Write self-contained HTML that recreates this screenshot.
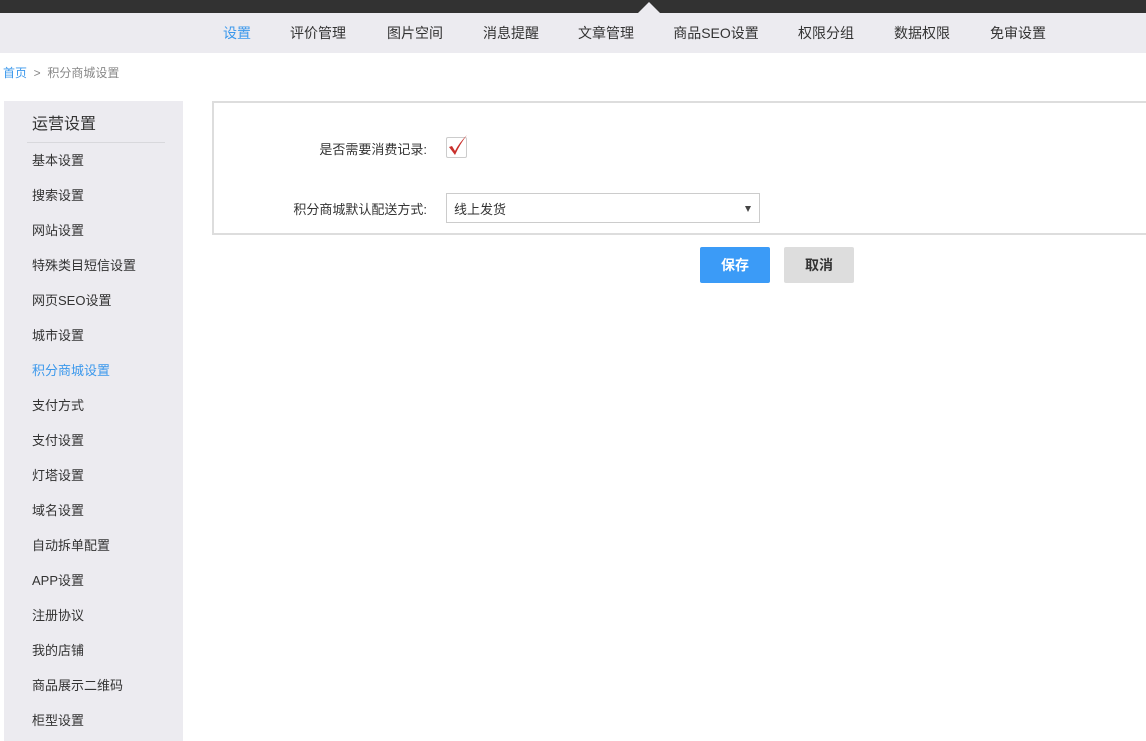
<!DOCTYPE html>
<html><head><meta charset="utf-8"><style>
*{margin:0;padding:0;box-sizing:border-box}
body{width:1146px;height:739px;overflow:hidden;background:#fff;font-family:"Liberation Sans","Noto Sans CJK SC",sans-serif;color:#333;position:relative}
.top{position:absolute;left:0;top:0;width:1146px;height:13px;background:#323232}
.tri{position:absolute;left:638px;top:2px;width:0;height:0;border-left:11px solid transparent;border-right:11px solid transparent;border-bottom:11px solid #ecebf0}
.nav{position:absolute;top:13px;left:0;width:1146px;height:40px;background:#ecebf0}
.nav span{position:absolute;top:10px;font-size:14px;color:#333;transform:translateX(-50%);white-space:nowrap}
.bc{position:absolute;left:3px;top:64px;font-size:12px;color:#888}
.bc a{color:#3b98ec}
.side{position:absolute;left:4px;top:101px;width:179px;height:640px;background:#ecebf0}
.side h3{position:absolute;left:28px;top:9px;font-size:16px;font-weight:normal;color:#333}
.side .ln{position:absolute;left:23px;top:41px;width:138px;height:1px;background:#d8d8dc}
.side div.i{position:absolute;left:28px;font-size:13px;color:#333;margin-top:-3px}
.panel{position:absolute;left:212px;top:101px;width:940px;height:134px;border:2px solid #ddd;background:#fff}
.lab{position:absolute;font-size:13px;color:#333;text-align:right;width:200px}
.cb{position:absolute;left:446px;top:137px;width:21px;height:21px;border:1px solid #ccc;border-radius:2px;background:#fff}
.sel{position:absolute;left:446px;top:193px;width:314px;height:30px;border:1px solid #ccc;font-size:13px;padding:5px 0 0 7px;color:#333}
.sel:after{content:"";position:absolute;right:8px;top:12px;border-left:3px solid transparent;border-right:3px solid transparent;border-top:6px solid #444}
.btn{position:absolute;top:247px;width:70px;height:36px;border-radius:2px;font-size:14px;font-weight:bold;text-align:center;line-height:36px}
</style></head><body>
<div class="top"><div class="tri"></div></div>
<div class="nav">
<span style="left:237px;color:#3b98ec">设置</span>
<span style="left:318px">评价管理</span>
<span style="left:415px">图片空间</span>
<span style="left:511px">消息提醒</span>
<span style="left:606px">文章管理</span>
<span style="left:716px">商品SEO设置</span>
<span style="left:826px">权限分组</span>
<span style="left:922px">数据权限</span>
<span style="left:1018px">免审设置</span>
</div>
<div class="bc"><a>首页</a> &nbsp;&gt;&nbsp; 积分商城设置</div>
<div class="side">
<h3>运营设置</h3><div class="ln"></div>
<div class="i" style="top:52px">基本设置</div>
<div class="i" style="top:87px">搜索设置</div>
<div class="i" style="top:122px">网站设置</div>
<div class="i" style="top:157px">特殊类目短信设置</div>
<div class="i" style="top:192px">网页SEO设置</div>
<div class="i" style="top:227px">城市设置</div>
<div class="i" style="top:262px;color:#3b98ec">积分商城设置</div>
<div class="i" style="top:297px">支付方式</div>
<div class="i" style="top:332px">支付设置</div>
<div class="i" style="top:367px">灯塔设置</div>
<div class="i" style="top:402px">域名设置</div>
<div class="i" style="top:437px">自动拆单配置</div>
<div class="i" style="top:472px">APP设置</div>
<div class="i" style="top:507px">注册协议</div>
<div class="i" style="top:542px">我的店铺</div>
<div class="i" style="top:577px">商品展示二维码</div>
<div class="i" style="top:612px">柜型设置</div>
</div>
<div class="panel"></div>
<div class="lab" style="left:227px;top:139px">是否需要消费记录:</div>
<div class="cb"><svg width="24" height="24" viewBox="0 0 24 24" style="position:absolute;left:-1px;top:-4px"><path d="M3 13 L6 12 L9 17 Q13 9 21 1 Q14 10 9 21 Z" fill="#c9302c"/></svg></div>
<div class="lab" style="left:227px;top:199px">积分商城默认配送方式:</div>
<div class="sel">线上发货</div>
<div class="btn" style="left:700px;background:#3b9bf7;color:#fff">保存</div>
<div class="btn" style="left:784px;background:#ddd;color:#333">取消</div>
</body></html>
